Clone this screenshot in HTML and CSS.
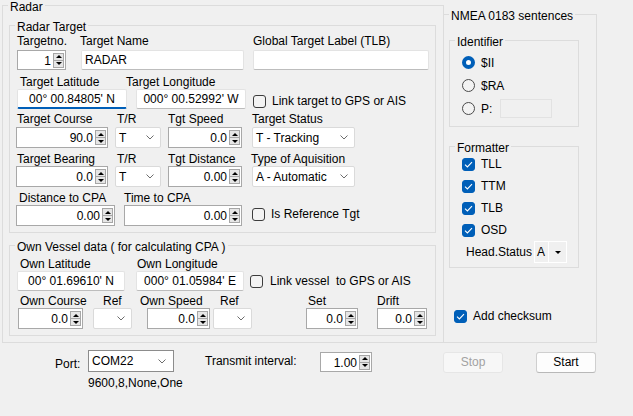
FILE: index.html
```html
<!DOCTYPE html>
<html>
<head>
<meta charset="utf-8">
<link rel="stylesheet" href="styles.css">
</head>
<body>
<div class="top">
  <div class="group g-radar">
    <span class="gt">Radar</span>
    <div class="group g-target">
      <span class="gt">Radar Target</span>
      <div class="row rA">
        <div class="f f-tno"><span class="lab">Targetno.</span>
          <div class="num h20"><span class="v">1</span><span class="spin"><b><i class="up"></i></b><b><i class="dn"></i></b></span></div>
        </div>
        <div class="f f-tname"><span class="lab">Target Name</span>
          <div class="tb h20 tb-name">RADAR</div>
        </div>
        <div class="f f-tlb"><span class="lab">Global Target Label (TLB)</span>
          <div class="tb h20"></div>
        </div>
      </div>
      <div class="row rB">
        <div class="f f-lat"><span class="lab">Target Latitude</span>
          <div class="tb h20 ctr focus">00° 00.84805' N</div>
        </div>
        <div class="f f-lon"><span class="lab">Target Longitude</span>
          <div class="tb h20 ctr">000° 00.52992' W</div>
        </div>
        <div class="chkline c-link"><span class="chk"></span><span class="ct">Link target to GPS or AIS</span></div>
      </div>
      <div class="row rC">
        <div class="f f-course"><span class="lab">Target Course</span>
          <div class="num h21"><span class="v">90.0</span><span class="spin"><b><i class="up"></i></b><b><i class="dn"></i></b></span></div>
        </div>
        <div class="f f-tr"><span class="lab">T/R</span>
          <div class="cb h21"><span class="cv">T</span><svg class="chev" width="8" height="5" viewBox="0 0 8 5"><path d="M0.5 0.5 L4 4 L7.5 0.5" fill="none" stroke="#6d6d6d" stroke-width="1"/></svg></div>
        </div>
        <div class="f f-speed"><span class="lab">Tgt Speed</span>
          <div class="num h21"><span class="v">0.0</span><span class="spin"><b><i class="up"></i></b><b><i class="dn"></i></b></span></div>
        </div>
        <div class="f f-status"><span class="lab">Target Status</span>
          <div class="cb h21"><span class="cv">T - Tracking</span><svg class="chev" width="8" height="5" viewBox="0 0 8 5"><path d="M0.5 0.5 L4 4 L7.5 0.5" fill="none" stroke="#6d6d6d" stroke-width="1"/></svg></div>
        </div>
      </div>
      <div class="row rD">
        <div class="f f-course"><span class="lab">Target Bearing</span>
          <div class="num h21"><span class="v">0.0</span><span class="spin"><b><i class="up"></i></b><b><i class="dn"></i></b></span></div>
        </div>
        <div class="f f-tr"><span class="lab">T/R</span>
          <div class="cb h21"><span class="cv">T</span><svg class="chev" width="8" height="5" viewBox="0 0 8 5"><path d="M0.5 0.5 L4 4 L7.5 0.5" fill="none" stroke="#6d6d6d" stroke-width="1"/></svg></div>
        </div>
        <div class="f f-speed"><span class="lab">Tgt Distance</span>
          <div class="num h21"><span class="v">0.00</span><span class="spin"><b><i class="up"></i></b><b><i class="dn"></i></b></span></div>
        </div>
        <div class="f f-status"><span class="lab">Type of Aquisition</span>
          <div class="cb h21"><span class="cv">A - Automatic</span><svg class="chev" width="8" height="5" viewBox="0 0 8 5"><path d="M0.5 0.5 L4 4 L7.5 0.5" fill="none" stroke="#6d6d6d" stroke-width="1"/></svg></div>
        </div>
      </div>
      <div class="row rE">
        <div class="f f-dcpa"><span class="lab">Distance to CPA</span>
          <div class="num h21"><span class="v">0.00</span><span class="spin"><b><i class="up"></i></b><b><i class="dn"></i></b></span></div>
        </div>
        <div class="f f-tcpa"><span class="lab">Time to CPA</span>
          <div class="num h21"><span class="v">0.00</span><span class="spin"><b><i class="up"></i></b><b><i class="dn"></i></b></span></div>
        </div>
        <div class="chkline c-ref"><span class="chk"></span><span class="ct">Is Reference Tgt</span></div>
      </div>
    </div>
    <div class="group g-own">
      <span class="gt">Own Vessel data ( for calculating CPA )</span>
      <div class="row rF">
        <div class="f f-olat"><span class="lab">Own Latitude</span>
          <div class="tb h20 ctr">00° 01.69610' N</div>
        </div>
        <div class="f f-olon"><span class="lab">Own Longitude</span>
          <div class="tb h20 ctr">000° 01.05984' E</div>
        </div>
        <div class="chkline c-vlink"><span class="chk"></span><span class="ct">Link vessel &nbsp;to GPS or AIS</span></div>
      </div>
      <div class="row rG">
        <div class="f f-ocourse"><span class="lab">Own Course</span>
          <div class="num h21"><span class="v">0.0</span><span class="spin"><b><i class="up"></i></b><b><i class="dn"></i></b></span></div>
        </div>
        <div class="f f-ref1"><span class="lab">Ref</span>
          <div class="cb h21"><span class="cv"></span><svg class="chev" width="8" height="5" viewBox="0 0 8 5"><path d="M0.5 0.5 L4 4 L7.5 0.5" fill="none" stroke="#6d6d6d" stroke-width="1"/></svg></div>
        </div>
        <div class="f f-ospeed"><span class="lab">Own Speed</span>
          <div class="num h21"><span class="v">0.0</span><span class="spin"><b><i class="up"></i></b><b><i class="dn"></i></b></span></div>
        </div>
        <div class="f f-ref2"><span class="lab">Ref</span>
          <div class="cb h21"><span class="cv"></span><svg class="chev" width="8" height="5" viewBox="0 0 8 5"><path d="M0.5 0.5 L4 4 L7.5 0.5" fill="none" stroke="#6d6d6d" stroke-width="1"/></svg></div>
        </div>
        <div class="f f-set"><span class="lab">Set</span>
          <div class="num h21"><span class="v">0.0</span><span class="spin"><b><i class="up"></i></b><b><i class="dn"></i></b></span></div>
        </div>
        <div class="f f-drift"><span class="lab">Drift</span>
          <div class="num h21"><span class="v">0.0</span><span class="spin"><b><i class="up"></i></b><b><i class="dn"></i></b></span></div>
        </div>
      </div>
    </div>
  </div>
  <div class="group g-nmea">
    <span class="gt">NMEA 0183 sentences</span>
    <div class="group g-ident">
      <span class="gt">Identifier</span>
      <div class="opt oi"><span class="radio on"></span><span class="ot">$II</span></div>
      <div class="opt oi"><span class="radio"></span><span class="ot">$RA</span></div>
      <div class="opt oi"><span class="radio"></span><span class="ot">P:</span><span class="ptb"></span></div>
    </div>
    <div class="group g-fmt">
      <span class="gt">Formatter</span>
      <div class="opt of"><span class="chk on"><svg width="9" height="7" viewBox="0 0 9 7"><path d="M1 3.6 L3.4 6 L8 1.2" fill="none" stroke="#fff" stroke-width="1.1"/></svg></span><span class="ot">TLL</span></div>
      <div class="opt of"><span class="chk on"><svg width="9" height="7" viewBox="0 0 9 7"><path d="M1 3.6 L3.4 6 L8 1.2" fill="none" stroke="#fff" stroke-width="1.1"/></svg></span><span class="ot">TTM</span></div>
      <div class="opt of"><span class="chk on"><svg width="9" height="7" viewBox="0 0 9 7"><path d="M1 3.6 L3.4 6 L8 1.2" fill="none" stroke="#fff" stroke-width="1.1"/></svg></span><span class="ot">TLB</span></div>
      <div class="opt of"><span class="chk on"><svg width="9" height="7" viewBox="0 0 9 7"><path d="M1 3.6 L3.4 6 L8 1.2" fill="none" stroke="#fff" stroke-width="1.1"/></svg></span><span class="ot">OSD</span></div>
      <div class="opt hs"><span>Head.Status</span><span class="hscb"><span class="hsa">A</span><span class="hsdd"><i class="tri"></i></span></span></div>
    </div>
    <div class="opt addck"><span class="chk on"><svg width="9" height="7" viewBox="0 0 9 7"><path d="M1 3.6 L3.4 6 L8 1.2" fill="none" stroke="#fff" stroke-width="1.1"/></svg></span><span class="ot">Add checksum</span></div>
  </div>
</div>
<div class="bottom">
  <span class="plab">Port:</span>
  <div class="pcol">
    <div class="cb com"><span class="cv">COM22</span><svg class="chev" width="8" height="5" viewBox="0 0 8 5"><path d="M0.5 0.5 L4 4 L7.5 0.5" fill="none" stroke="#6d6d6d" stroke-width="1"/></svg></div>
    <span class="cap">9600,8,None,One</span>
  </div>
  <span class="tlab">Transmit interval:</span>
  <div class="num nint"><span class="v">1.00</span><span class="spin"><b><i class="up"></i></b><b><i class="dn"></i></b></span></div>
  <div class="btn stop">Stop</div>
  <div class="btn start">Start</div>
</div>
</body>
</html>
```

FILE: styles.css
```css
* { box-sizing: border-box; }
html, body { margin: 0; padding: 0; }
body {
  width: 633px;
  height: 416px;
  overflow: hidden;
  background: #f0f0f0;
  font-family: "Liberation Sans", Arial, sans-serif;
  font-size: 12px;
  color: #000;
}

/* group boxes */
.group { border: 1px solid #dcdcdc; flex: none; }
.gt {
  display: block;
  width: max-content;
  margin: -6px 0 0 5px;
  padding: 0 2px;
  background: #f0f0f0;
  line-height: 14px;
  height: 14px;
  white-space: nowrap;
}

.top { display: flex; align-items: flex-start; height: 343px; }
.g-radar { margin: 5px 0 0 2px; width: 442px; height: 338px; }
.g-nmea { margin: 14px 0 0 -1px; width: 154px; height: 329px; }

.g-target { margin: 11px 0 0 6px; width: 427px; height: 208px; }
.g-own { margin: 12px 0 0 6px; width: 427px; height: 91px; }

/* rows & fields */
.row { display: flex; align-items: flex-start; }
.f { display: flex; flex-direction: column; flex: none; }
.lab { display: block; line-height: 14px; height: 14px; white-space: nowrap; }

.rA .lab { margin-bottom: 2px; }
.rB { margin-top: 5px; }
.rC { margin-top: 3px; }
.rC .lab { margin-bottom: 1px; }
.rD { margin-top: 4px; }
.rE { margin-top: 4px; }
.rF { margin-top: 3px; }
.rG { margin-top: 3px; }

.f-tno { margin-left: 7px; width: 49px; }
.f-tname { margin-left: 14px; width: 164px; }
.f-tname .tb { margin-left: 1px; width: 163px; }
.f-tlb { margin-left: 9px; width: 176px; }

.f-lat { margin-left: 7px; width: 110px; }
.f-lat .lab { padding-left: 3px; }
.f-lon { margin-left: -1px; width: 120px; }
.f-lon .tb { margin-left: 10px; width: 110px; }

.f-course { margin-left: 6px; width: 92px; }
.f-course .lab { padding-left: 1px; }
.f-tr { margin-left: 7px; width: 46px; }
.f-tr .lab { padding-left: 2px; }
.f-speed { margin-left: 7px; width: 74px; }
.f-status { margin-left: 10px; width: 103px; }
.rD .f-status .lab { margin-left: -1px; }

.f-dcpa { margin-left: 6px; width: 99px; }
.f-dcpa .lab { padding-left: 3px; }
.f-tcpa { margin-left: 9px; width: 118px; }

.f-olat { margin-left: 7px; width: 108px; }
.f-olat .lab { padding-left: 3px; }
.f-olon { margin-left: 11px; width: 108px; }
.f-olon .lab { padding-left: 1px; }

.f-ocourse { margin-left: 8px; width: 65px; }
.f-ocourse .lab { padding-left: 2px; }
.f-ref1 { margin-left: 10px; width: 39px; }
.f-ref1 .lab { padding-left: 10px; }
.f-ospeed { margin-left: 8px; width: 70px; }
.f-ospeed .num { margin-left: 7px; width: 63px; }
.f-ref2 { margin-left: 3px; width: 39px; }
.f-ref2 .lab { padding-left: 7px; }
.f-set { margin-left: 54px; width: 52px; }
.f-set .lab { padding-left: 2px; }
.f-drift { margin-left: 19px; width: 50px; }

.h20 { height: 20px; }
.h21 { height: 21px; }

/* text box */
.tb {
  background: #fff;
  border: 1px solid #e3e3e3;
  border-bottom-color: #bdbdbd;
  border-radius: 2px;
  padding: 0 3px;
  line-height: 18px;
  white-space: nowrap;
  overflow: hidden;
}
.tb.ctr { text-align: center; }
.tb.focus { border-bottom: 2px solid #005fb8; }

/* numeric up-down */
.num {
  display: flex;
  align-items: center;
  background: #fff;
  border: 1px solid #a8a8a8;
}
.num .v { flex: 1; text-align: right; line-height: 16px; padding-top: 1px; }
.spin {
  flex: none;
  display: flex;
  flex-direction: column;
  width: 11px;
  height: 15px;
  margin: 0 1px 0 2px;
}
.spin b {
  flex: 1;
  display: flex;
  align-items: center;
  justify-content: center;
  background: #e6e6e6;
  border: 1px solid #a6a6a6;
}
.spin b + b { border-top: 0; }
.spin i { display: block; width: 0; height: 0; border-left: 3px solid transparent; border-right: 3px solid transparent; }
.spin i.up { border-bottom: 3px solid #000; }
.spin i.dn { border-top: 3px solid #000; }

/* combo */
.cb {
  display: flex;
  align-items: center;
  justify-content: space-between;
  background: #fff;
  border: 1px solid #dadada;
  border-radius: 2px;
  padding: 0 6px 0 3px;
  white-space: nowrap;
}
.cb .cv { line-height: 14px; }
.chev { flex: none; }

/* checkbox */
.chkline { display: flex; align-items: center; height: 14px; flex: none; white-space: nowrap; }
.chkline .ct { margin-left: 6px; }
.c-link { margin: 19px 0 0 7px; }
.c-ref { margin: 16px 0 0 10px; }
.c-vlink { margin: 17px 0 0 6px; }
.c-vlink .ct { margin-left: 7px; }
.chk {
  flex: none;
  display: flex;
  align-items: center;
  justify-content: center;
  width: 13px;
  height: 13px;
  border: 1px solid #3c3c3c;
  border-radius: 3px;
  background: #f3f3f3;
}
.chk.on { background: #005fb8; border-color: #005fb8; }

/* radio */
.radio {
  flex: none;
  width: 13px;
  height: 13px;
  border-radius: 50%;
  border: 1px solid #4a4a4a;
  background: #f3f3f3;
}
.radio.on {
  border: 4px solid #005fb8;
  background: #fff;
}

/* NMEA */
.g-ident { margin: 17px 0 0 5px; width: 130px; height: 87px; }
.g-ident .gt { margin-bottom: 2px; }
.g-fmt { margin: 19px 0 0 5px; width: 130px; height: 122px; }
.g-fmt .gt { margin-bottom: -2px; }
.opt { display: flex; align-items: center; white-space: nowrap; }
.oi { height: 23px; padding-left: 12px; }
.of { height: 22px; padding-left: 12px; }
.ot { margin-left: 6px; }
.ptb {
  margin-left: 8px;
  width: 52px;
  height: 19px;
  border: 1px solid #e2e2e2;
  background: #f0f0f0;
}
.hs { height: 22px; padding-left: 16px; }
.hscb {
  display: flex;
  margin-left: 2px;
  width: 33px;
  height: 22px;
  border: 1px solid #fff;
}
.hsa { width: 14px; padding-left: 2px; line-height: 20px; border-right: 1px solid #fff; }
.hsdd { flex: 1; display: flex; align-items: center; justify-content: center; }
.tri { display: block; width: 0; height: 0; border-left: 3px solid transparent; border-right: 3px solid transparent; border-top: 3px solid #000; }
.addck { height: 22px; margin: 37px 0 0 10px; }

/* bottom bar */
.bottom { display: flex; align-items: flex-start; }
.plab { flex: none; margin: 14px 0 0 55px; width: 33px; line-height: 14px; }
.pcol { flex: none; margin-top: 7px; width: 86px; display: flex; flex-direction: column; }
.cb.com { height: 22px; border-color: #8c8c8c; border-radius: 0; padding-right: 7px; }
.cap { margin-top: 4px; line-height: 14px; white-space: nowrap; }
.tlab { flex: none; margin: 11px 0 0 31px; width: 115px; line-height: 14px; white-space: nowrap; }
.nint { flex: none; margin-top: 9px; width: 52px; height: 20px; }
.btn {
  flex: none;
  margin-top: 9px;
  width: 60px;
  height: 21px;
  border-radius: 3px;
  text-align: center;
  line-height: 19px;
}
.stop { margin-left: 71px; background: #f7f7f7; border: 1px solid #e6e6e6; color: #a2a2a2; }
.start { margin-left: 33px; background: #fdfdfd; border: 1px solid #cfcfcf; border-bottom-color: #b8b8b8; }
```
